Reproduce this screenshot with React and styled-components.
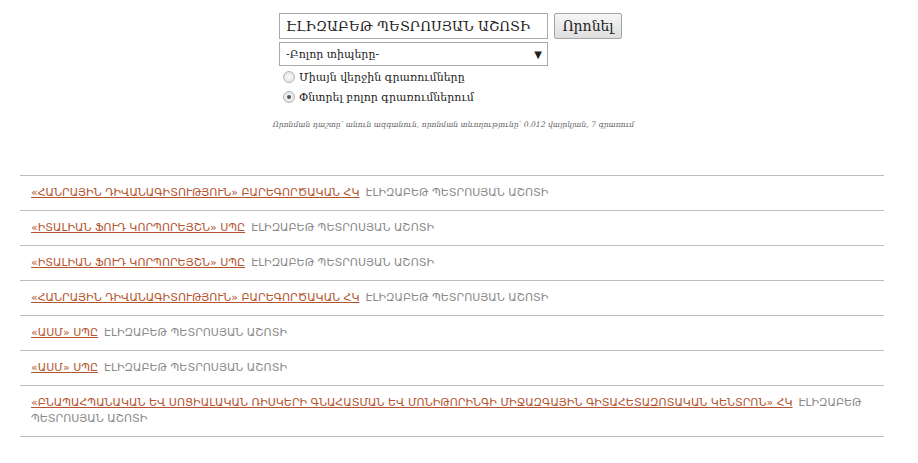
import React from "react";
import styled, { createGlobalStyle } from "styled-components";

const GlobalStyle = createGlobalStyle`
  body {
    margin: 0;
    background: #fff;
    font-family: "DejaVu Sans", "Noto Sans", sans-serif;
  }
`;

const Page = styled.div`
  width: 864px;
  margin-left: 20px;
  padding-top: 13px;
`;

const SearchForm = styled.form`
  display: flex;
  flex-direction: column;
  align-items: center;
  margin-left: -3px;
`;

const Block = styled.div`
  width: 343px;
`;

const Line = styled.div`
  display: flex;
  gap: 6px;
`;

const TextInput = styled.input`
  width: 269px;
  height: 26px;
  box-sizing: border-box;
  border: 1px solid #a9a9a9;
  padding: 0 6px;
  font-family: "DejaVu Serif", "DejaVu Sans", serif;
  font-size: 13.5px;
  color: #222;
  outline: none;
`;

const Button = styled.button`
  height: 26px;
  width: 68px;
  box-sizing: border-box;
  border: 1px solid #a5a5a5;
  border-radius: 2px;
  background: linear-gradient(#f6f6f6, #dedede);
  font-family: "DejaVu Serif", "DejaVu Sans", serif;
  font-size: 14px;
  color: #222;
  padding: 0;
`;

const SelectBox = styled.div`
  margin-top: 3px;
  width: 269px;
  height: 24px;
  box-sizing: border-box;
  border: 1px solid #a9a9a9;
  display: flex;
  align-items: center;
  justify-content: space-between;
  padding: 0 5px 0 6px;
  font-family: "DejaVu Serif", "DejaVu Sans", serif;
  font-size: 11px;
  color: #222;
`;

const Arrow = styled.span`
  font-size: 10px;
  color: #222;
`;

const RadioRow = styled.label`
  display: flex;
  align-items: center;
  gap: 4px;
  margin-left: 4px;
  height: 20px;
  font-family: "DejaVu Serif", "DejaVu Sans", serif;
  font-size: 11px;
  color: #222;
  &:first-of-type {
    margin-top: 1px;
  }
`;

const Radio = styled.span`
  width: 10px;
  height: 10px;
  border-radius: 50%;
  border: 1px solid #b5b5b5;
  background: radial-gradient(circle, #fafafa, #dcdcdc);
  display: flex;
  align-items: center;
  justify-content: center;
  &::after {
    content: "";
    display: ${(p) => (p.checked ? "block" : "none")};
    width: 4px;
    height: 4px;
    border-radius: 50%;
    background: #555;
  }
`;

const Info = styled.p`
  margin: 13px 0 0;
  text-align: center;
  font-family: "DejaVu Serif", "DejaVu Sans", serif;
  font-style: italic;
  font-size: 7.6px;
  color: #666;
  padding-left: 6px;
`;

const Results = styled.ul`
  list-style: none;
  margin: 46px 0 0;
  padding: 0;
  border-bottom: 1px solid #bdbdbd;
`;

const Row = styled.li`
  border-top: 1px solid #bdbdbd;
  padding: 9px 11px;
  line-height: 16px;
  font-size: 11px;
  color: #8a8a8a;
`;

const OrgLink = styled.a`
  color: #b4542e;
  text-decoration: underline;
  margin-right: 6px;
`;

const NAME = "ԷԼԻԶԱԲԵԹ ՊԵՏՐՈՍՅԱՆ ԱՇՈՏԻ";

const rows = [
  "«ՀԱՆՐԱՅԻՆ ԴԻՎԱՆԱԳԻՏՈՒԹՅՈՒՆ» ԲԱՐԵԳՈՐԾԱԿԱՆ ՀԿ",
  "«ԻՏԱԼԻԱՆ ՖՈՒԴ ԿՈՐՊՈՐԵՅՇՆ» ՍՊԸ",
  "«ԻՏԱԼԻԱՆ ՖՈՒԴ ԿՈՐՊՈՐԵՅՇՆ» ՍՊԸ",
  "«ՀԱՆՐԱՅԻՆ ԴԻՎԱՆԱԳԻՏՈՒԹՅՈՒՆ» ԲԱՐԵԳՈՐԾԱԿԱՆ ՀԿ",
  "«ԱՍՄ» ՍՊԸ",
  "«ԱՍՄ» ՍՊԸ",
  "«ԲՆԱՊԱՀՊԱՆԱԿԱՆ ԵՎ ՍՈՑԻԱԼԱԿԱՆ ՌԻՍԿԵՐԻ ԳՆԱՀԱՏՄԱՆ ԵՎ ՄՈՆԻԹՈՐԻՆԳԻ ՄԻՋԱԶԳԱՅԻՆ ԳԻՏԱՀԵՏԱԶՈՏԱԿԱՆ ԿԵՆՏՐՈՆ» ՀԿ",
];

export default function App() {
  return (
    <>
      <GlobalStyle />
      <Page>
        <SearchForm onSubmit={(e) => e.preventDefault()}>
          <Block>
            <Line>
              <TextInput defaultValue={NAME} />
              <Button type="submit">Որոնել</Button>
            </Line>
            <SelectBox>
              <span>-Բոլոր տիպերը-</span>
              <Arrow>▼</Arrow>
            </SelectBox>
            <RadioRow>
              <Radio />
              Միայն վերջին գրառումները
            </RadioRow>
            <RadioRow>
              <Radio checked />
              Փնտրել բոլոր գրառումներում
            </RadioRow>
          </Block>
          <Info>
            Որոնման դաշտը՝ անուն ազգանուն, որոնման տևողությունը՝ 0.012 վայրկյան, 7 գրառում
          </Info>
        </SearchForm>
        <Results>
          {rows.map((org, i) => (
            <Row key={i}>
              <OrgLink href="#">{org}</OrgLink>
              {NAME}
            </Row>
          ))}
        </Results>
      </Page>
    </>
  );
}
